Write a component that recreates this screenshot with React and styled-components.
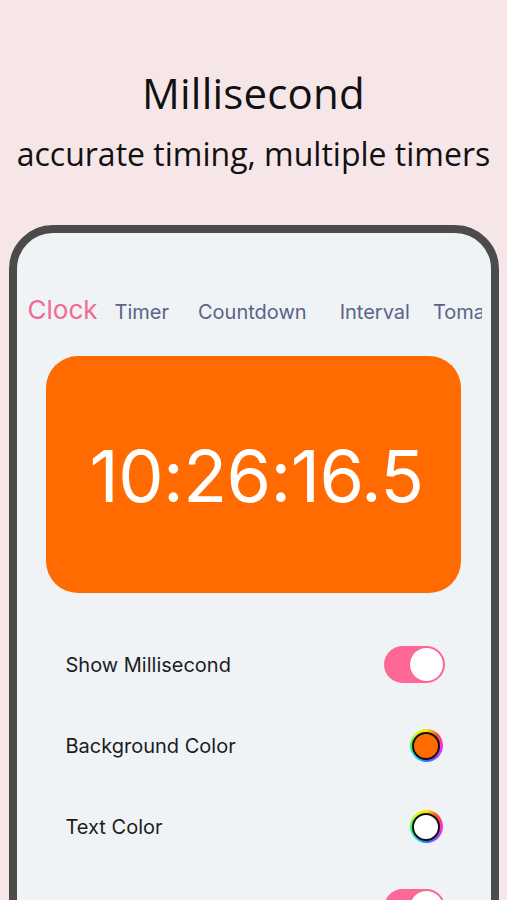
import React from "react";
import styled, { createGlobalStyle } from "styled-components";

const Global = createGlobalStyle`
  html, body { margin: 0; padding: 0; }
  body {
    background: #f6e6e8;
    overflow: hidden;
    height: 900px;
  }
`;

const Page = styled.div`
  width: 507px;
  height: 900px;
  overflow: hidden;
  display: flex;
  flex-direction: column;
  align-items: center;
`;

const Header = styled.header`
  flex: none;
  display: flex;
  flex-direction: column;
  align-items: center;
  padding-top: 66px;
  height: 225px;
  box-sizing: border-box;
  font-family: "Open Sans", "Noto Sans", sans-serif;
  color: #111;
`;

const Title = styled.h1`
  margin: 0;
  font-size: 42px;
  font-weight: 400;
  line-height: 54px;
  letter-spacing: 0.2px;
`;

const Subtitle = styled.p`
  margin: 14px 0 0;
  font-size: 32px;
  font-weight: 400;
  line-height: 40px;
`;

const Phone = styled.div`
  flex: none;
  width: 490px;
  height: 720px;
  box-sizing: border-box;
  border: 8px solid #4b4b4b;
  border-radius: 44px;
  background: #eff3f6;
  display: flex;
  flex-direction: column;
  overflow: hidden;
  font-family: Inter, "Liberation Sans", sans-serif;
  & > * { flex: none; }
`;

const Tabs = styled.nav`
  display: flex;
  align-items: baseline;
  padding: 62px 0 0 11px;
  margin-right: 9px;
  overflow: hidden;
  white-space: nowrap;
  height: 30px;
`;

const Tab = styled.span`
  font-size: ${(p) => (p.$active ? "26px" : "20px")};
  line-height: 30px;
  color: ${(p) => (p.$active ? "#f26a94" : "#5a6486")};
  margin-left: ${(p) => p.$gap || 0}px;
  flex: none;
`;

const ClockCard = styled.div`
  margin: 31px 30px 0 29px;
  height: 237px;
  border-radius: 32px;
  background: #ff6b00;
  display: flex;
  align-items: center;
  justify-content: center;
`;

const Time = styled.div`
  color: #ffffff;
  font-size: 72px;
  font-weight: 400;
  letter-spacing: -0.6px;
  padding: 2px 0 0 7px;
`;

const Settings = styled.div`
  display: flex;
  flex-direction: column;
  padding: 31px 46px 0 49px;
`;

const Row = styled.div`
  height: 81px;
  display: flex;
  align-items: center;
  justify-content: space-between;
`;

const Label = styled.span`
  font-size: 20px;
  color: #1c1c1e;
`;

const Toggle = styled.div`
  width: 61px;
  height: 37px;
  border-radius: 19px;
  background: #ff6896;
  display: flex;
  align-items: center;
  justify-content: flex-end;
  padding: 2px;
  box-sizing: border-box;
  margin-left: auto;
`;

const Knob = styled.div`
  width: 33px;
  height: 33px;
  border-radius: 50%;
  background: #fff;
  box-shadow: 0 0 0 1px rgba(240, 90, 130, 0.4);
`;

const Swatch = styled.div`
  width: 33px;
  height: 33px;
  margin-right: 2px;
  border-radius: 50%;
  background: conic-gradient(
    #ffe600, #ff4a2a, #ff2fd6, #9a4bff, #2a6bff, #18e0ff, #2bff4a, #c8ff1a, #ffe600
  );
  display: flex;
  align-items: center;
  justify-content: center;
`;

const SwatchFill = styled.div`
  width: 24px;
  height: 24px;
  border-radius: 50%;
  background: ${(p) => p.$color};
  border: 2.5px solid #111;
`;

export default function App() {
  return (
    <>
      <Global />
      <Page>
        <Header>
          <Title>Millisecond</Title>
          <Subtitle>accurate timing, multiple timers</Subtitle>
        </Header>
        <Phone>
          <Tabs>
            <Tab $active>Clock</Tab>
            <Tab $gap={17}>Timer</Tab>
            <Tab $gap={29}>Countdown</Tab>
            <Tab $gap={33}>Interval</Tab>
            <Tab $gap={23}>Tomato</Tab>
          </Tabs>
          <ClockCard>
            <Time>10:26:16.5</Time>
          </ClockCard>
          <Settings>
            <Row>
              <Label>Show Millisecond</Label>
              <Toggle><Knob /></Toggle>
            </Row>
            <Row>
              <Label>Background Color</Label>
              <Swatch><SwatchFill $color="#ff6b00" /></Swatch>
            </Row>
            <Row>
              <Label>Text Color</Label>
              <Swatch><SwatchFill $color="#ffffff" /></Swatch>
            </Row>
            <Row>
              <Toggle><Knob /></Toggle>
            </Row>
          </Settings>
        </Phone>
      </Page>
    </>
  );
}
